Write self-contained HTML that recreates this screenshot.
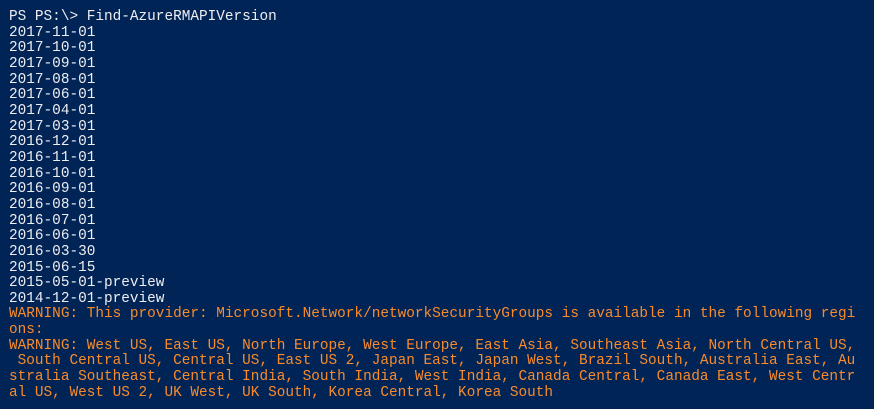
<!DOCTYPE html>
<html><head><meta charset="utf-8"><style>
html,body{margin:0;padding:0;width:874px;height:409px;background:#012456;overflow:hidden}
pre{margin:0;padding:10px 0 0 9px;font-family:"Liberation Mono",monospace;font-size:14.4px;line-height:15.65px;color:#eeedf0;white-space:pre}
.w{color:#f98b2b}
</style></head><body><pre>PS PS:\&gt; Find-AzureRMAPIVersion
2017-11-01
2017-10-01
2017-09-01
2017-08-01
2017-06-01
2017-04-01
2017-03-01
2016-12-01
2016-11-01
2016-10-01
2016-09-01
2016-08-01
2016-07-01
2016-06-01
2016-03-30
2015-06-15
2015-05-01-preview
2014-12-01-preview
<span class="w">WARNING: This provider: Microsoft.Network/networkSecurityGroups is available in the following regi
ons:
WARNING: West US, East US, North Europe, West Europe, East Asia, Southeast Asia, North Central US,
 South Central US, Central US, East US 2, Japan East, Japan West, Brazil South, Australia East, Au
stralia Southeast, Central India, South India, West India, Canada Central, Canada East, West Centr
al US, West US 2, UK West, UK South, Korea Central, Korea South</span></pre></body></html>
